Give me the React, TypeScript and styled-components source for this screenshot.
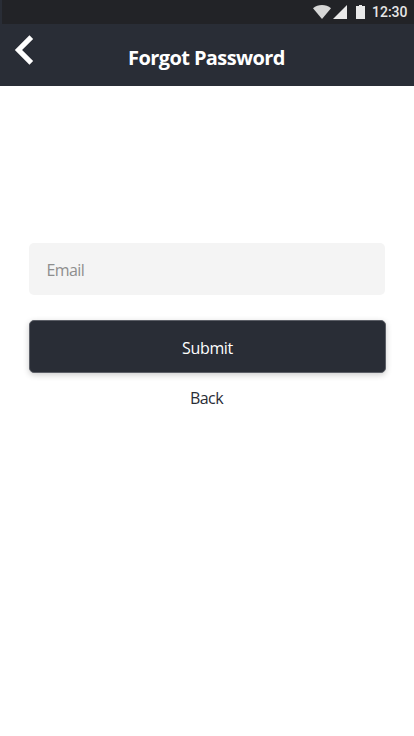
import React from "react";
import styled, { createGlobalStyle } from "styled-components";

const GlobalStyle = createGlobalStyle`
  *, *::before, *::after { box-sizing: border-box; }
  html, body { margin: 0; background: #fff; }
  body { font-family: "Open Sans", "Noto Sans", sans-serif; overflow: hidden; }
  button, input { font-family: inherit; }
`;

const Screen = styled.div`
  display: flex;
  flex-direction: column;
  height: 100vh;
  min-height: 736px;
  background: #fff;
`;

const StatusBar = styled.div`
  display: flex;
  align-items: center;
  justify-content: flex-end;
  height: 24px;
  padding-right: 6px;
  background: #222327;
  border-left: 2px solid #292d36;
`;

const StatusIcon = styled.svg<{ $gap: number }>`
  display: block;
  flex: none;
  margin-right: ${({ $gap }) => $gap}px;
  fill: #e9e9e9;
`;

const Clock = styled.span`
  width: 36px;
  font: 500 14px/24px Roboto, sans-serif;
  color: #e6e6e6;
  white-space: nowrap;
`;

const Header = styled.header`
  display: grid;
  grid-template-columns: 50px 1fr 50px;
  height: 62px;
  background: #292d36;
`;

const IconButton = styled.button`
  display: flex;
  align-items: flex-start;
  padding: 11px 0 0 14px;
  border: 0;
  background: none;
`;

const Title = styled.h1`
  margin: 0;
  padding: 20px 1px 0 0;
  font-size: 20px;
  line-height: 28px;
  font-weight: 700;
  letter-spacing: -0.6px;
  text-align: center;
  white-space: nowrap;
  color: #fff;
`;

const Form = styled.form`
  display: flex;
  flex-direction: column;
  padding: 157px 28px 0 29px;
`;

const EmailInput = styled.input`
  height: 52px;
  margin-right: 1px;
  padding: 2px 18px 0 17.5px;
  border: 0;
  border-radius: 5px;
  outline: 0;
  background: #f4f4f4;
  font-size: 16px;
  letter-spacing: -0.6px;
  color: #292d36;
  &::placeholder { color: #8e8e8e; opacity: 1; }
`;

const SubmitButton = styled.button`
  height: 53px;
  margin-top: 25px;
  padding: 2px 0 0;
  border: 1px solid #5c5f67;
  border-radius: 5px;
  background: #292d36;
  box-shadow: 0 2px 6px rgba(0, 0, 0, 0.2);
  font-size: 16px;
  letter-spacing: -0.35px;
  color: #fff;
`;

const BackLink = styled.button`
  align-self: center;
  margin: 13px 2px 0 0;
  padding: 0;
  border: 0;
  background: none;
  font-size: 16px;
  letter-spacing: -0.6px;
  line-height: 24px;
  color: #292d36;
`;

export default function App() {
  return (
    <Screen>
      <GlobalStyle />
      <StatusBar>
        <StatusIcon $gap={2} width="18" height="14" viewBox="0 0 18 14">
          <path d="M0 3.2C5-1 13-1 18 3.2L9 14Z" fill="#d6d6d6" />
        </StatusIcon>
        <StatusIcon $gap={9} width="14" height="14" viewBox="0 0 14 14">
          <path d="M14 0V14H0Z" />
        </StatusIcon>
        <StatusIcon $gap={7} width="9" height="14" viewBox="0 0 9 14">
          <path d="M3 0H6V1H9V14H0V1H3Z" />
        </StatusIcon>
        <Clock>12:30</Clock>
      </StatusBar>
      <Header>
        <IconButton type="button" aria-label="Back">
          <svg width="20" height="30" viewBox="0 0 20 30">
            <path d="M17.3 2.2L4.5 15L17.3 27.8" fill="none" stroke="#fff" strokeWidth="5.2" />
          </svg>
        </IconButton>
        <Title>Forgot Password</Title>
      </Header>
      <Form onSubmit={(e: React.FormEvent) => e.preventDefault()}>
        <EmailInput type="email" placeholder="Email" />
        <SubmitButton type="submit">Submit</SubmitButton>
        <BackLink type="button">Back</BackLink>
      </Form>
    </Screen>
  );
}
